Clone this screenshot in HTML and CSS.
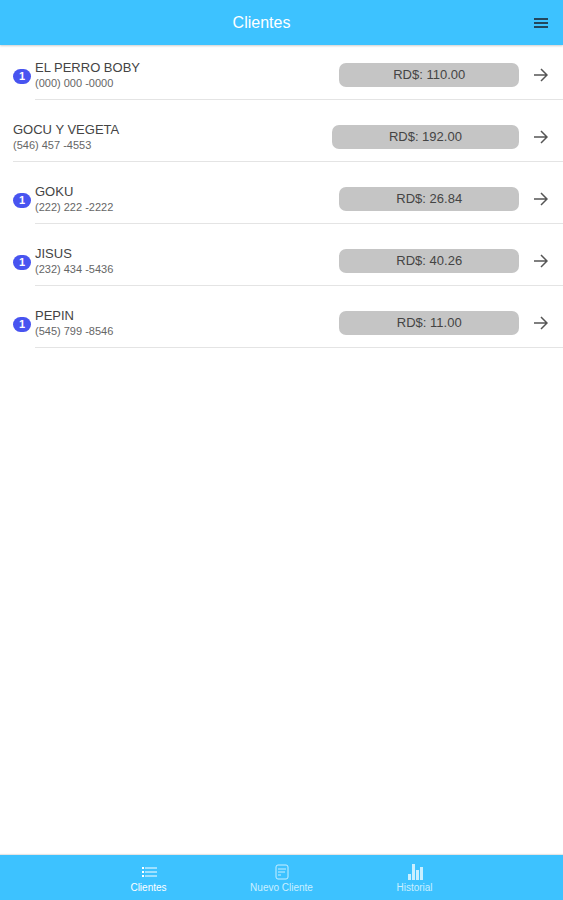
FILE: index.html
```html
<!DOCTYPE html>
<html lang="es">
<head>
    <meta charset="UTF-8">
    <meta name="viewport" content="width=device-width, initial-scale=1.0">
    <title>Clientes</title>
    <link rel="stylesheet" href="styles.css">
</head>
<body>
    <header class="toolbar">
        <h1 class="title">Clientes</h1>
        <button class="menu-button" type="button" aria-label="Menú">
            <svg width="16" height="12" viewBox="0 0 16 12"><path d="M1 2h14M1 6h14M1 10h14"/></svg>
        </button>
    </header>

    <!-- Client list -->
    <main class="content">
        <ul class="client-list">
            <li class="client">
                <span class="badge">1</span>
                <a class="client-inner" href="#">
                    <span class="client-label">
                        <span class="name">EL PERRO BOBY</span>
                        <span class="phone">(000) 000 -0000</span>
                    </span>
                    <span class="amount">RD$: 110.00</span>
                    <svg class="arrow" width="14" height="14" viewBox="0 0 14 14"><path d="M0 7h12M7 1l6 6-6 6"/></svg>
                </a>
            </li>
            <li class="client">
                <a class="client-inner" href="#">
                    <span class="client-label">
                        <span class="name">GOCU Y VEGETA</span>
                        <span class="phone">(546) 457 -4553</span>
                    </span>
                    <span class="amount">RD$: 192.00</span>
                    <svg class="arrow" width="14" height="14" viewBox="0 0 14 14"><path d="M0 7h12M7 1l6 6-6 6"/></svg>
                </a>
            </li>
            <li class="client">
                <span class="badge">1</span>
                <a class="client-inner" href="#">
                    <span class="client-label">
                        <span class="name">GOKU</span>
                        <span class="phone">(222) 222 -2222</span>
                    </span>
                    <span class="amount">RD$: 26.84</span>
                    <svg class="arrow" width="14" height="14" viewBox="0 0 14 14"><path d="M0 7h12M7 1l6 6-6 6"/></svg>
                </a>
            </li>
            <li class="client">
                <span class="badge">1</span>
                <a class="client-inner" href="#">
                    <span class="client-label">
                        <span class="name">JISUS</span>
                        <span class="phone">(232) 434 -5436</span>
                    </span>
                    <span class="amount">RD$: 40.26</span>
                    <svg class="arrow" width="14" height="14" viewBox="0 0 14 14"><path d="M0 7h12M7 1l6 6-6 6"/></svg>
                </a>
            </li>
            <li class="client">
                <span class="badge">1</span>
                <a class="client-inner" href="#">
                    <span class="client-label">
                        <span class="name">PEPIN</span>
                        <span class="phone">(545) 799 -8546</span>
                    </span>
                    <span class="amount">RD$: 11.00</span>
                    <svg class="arrow" width="14" height="14" viewBox="0 0 14 14"><path d="M0 7h12M7 1l6 6-6 6"/></svg>
                </a>
            </li>
        </ul>
    </main>

    <!-- Bottom tabs -->
    <nav class="tabs">
        <a class="tab active" href="#">
            <svg width="16" height="16" viewBox="0 0 16 16">
                <path class="line" d="M4 4h12M4 8h12M4 12h12"/>
                <path d="M1 3h2v2H1zM1 7h2v2H1zM1 11h2v2H1z"/>
            </svg>
            Clientes
        </a>
        <a class="tab" href="#">
            <svg width="16" height="16" viewBox="0 0 16 16">
                <rect class="line" x="2" y="1" width="12" height="14" rx="2"/>
                <path class="line" d="M4 5h8M4 8h7M4 11h3"/>
            </svg>
            Nuevo Cliente
        </a>
        <a class="tab" href="#">
            <svg width="16" height="16" viewBox="0 0 16 16">
                <path d="M1 10h3v6H1zM5 0h3v16H5zM9 6h3v10H9zM13 3h3v13h-3z"/>
            </svg>
            Historial
        </a>
    </nav>
</body>
</html>
```
FILE: styles.css
```css
* {
    box-sizing: border-box;
}
body {
    margin: 0;
    min-height: 100vh;
    display: flex;
    flex-direction: column;
    font-family: "Liberation Sans", Arial, sans-serif;
    background: #fff;
    color: #444;
}
a {
    color: inherit;
    text-decoration: none;
}
.toolbar {
    display: flex;
    align-items: center;
    height: 45px;
    padding: 0 12px 0 64px;
    background: #3dc2ff;
    box-shadow: 0 1px 2px rgba(0, 0, 0, 0.2);
}
.title {
    flex: 1;
    margin: 0;
    font-size: 16px;
    font-weight: 400;
    text-align: center;
    color: #fff;
}
.menu-button {
    display: flex;
    justify-content: flex-end;
    width: 92px;
    padding: 8px 2px;
    border: none;
    background: none;
    cursor: pointer;
}
.menu-button svg {
    stroke: #23465c;
    stroke-width: 2;
}
.content {
    flex: 1;
}
.client-list {
    margin: 0;
    padding: 0;
    list-style: none;
}
.client {
    display: flex;
    align-items: flex-end;
    height: 62px;
    padding-left: 13px;
}
.client:first-child {
    height: 55px;
}
.badge {
    width: 18px;
    margin: 0 4px 16px 0;
    border-radius: 8px;
    background: #4854f0;
    color: #fff;
    font-size: 11px;
    font-weight: 700;
    line-height: 15px;
    text-align: center;
}
.client-inner {
    flex: 1;
    align-self: stretch;
    display: flex;
    align-items: flex-end;
    padding: 0 15px 8px 0;
    border-bottom: 1px solid #e4e4e4;
}
.client-label {
    flex: 1;
    display: flex;
    flex-direction: column;
}
.name {
    font-size: 13px;
    line-height: 16px;
}
.phone {
    font-size: 11px;
    line-height: 15px;
    color: #666;
}
.amount {
    width: 35%;
    margin-bottom: 4px;
    border-radius: 7px;
    background: #c5c5c5;
    font-size: 13px;
    line-height: 24px;
    text-align: center;
}
.arrow {
    margin: 0 0 9px 15px;
    fill: none;
    stroke: #555;
    stroke-width: 1.5;
}
.tabs {
    display: flex;
    justify-content: center;
    height: 45px;
    background: #3dc2ff;
    box-shadow: 0 -1px 1px rgba(0, 0, 0, 0.1);
}
.tab {
    flex: 0 1 133px;
    display: flex;
    flex-direction: column;
    align-items: center;
    padding-top: 9px;
    font-size: 10px;
    line-height: 15px;
    color: #c9efff;
}
.tab svg {
    fill: currentColor;
}
.tab .line {
    fill: none;
    stroke: currentColor;
}
.active {
    color: #fff;
}
```
